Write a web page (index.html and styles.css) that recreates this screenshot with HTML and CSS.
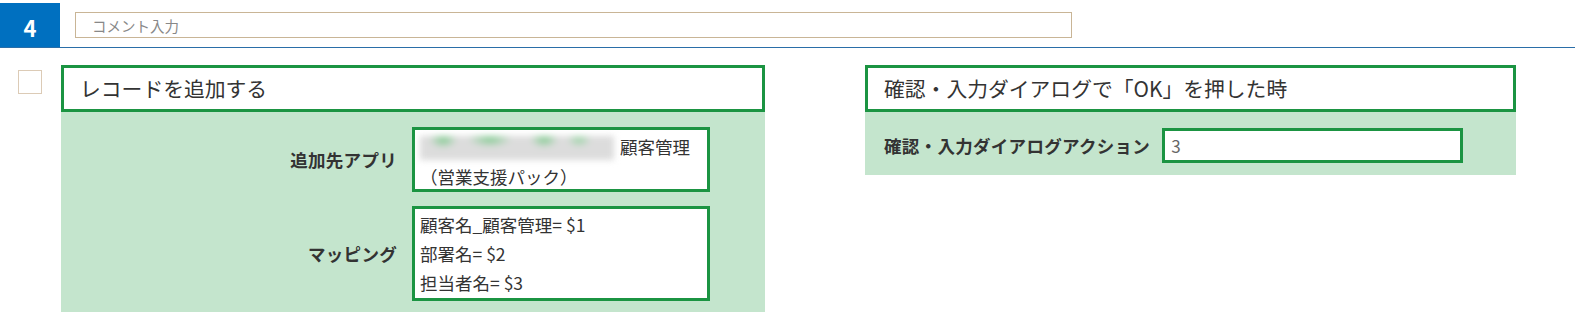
FILE: index.html
```html
<!DOCTYPE html>
<html lang="ja">
<head>
    <meta charset="UTF-8">
    <meta name="viewport" content="width=device-width, initial-scale=1.0">
    <title>アクション設定</title>
    <link rel="stylesheet" href="styles.css">
</head>
<body>
    <header class="step-bar">
        <div class="step-no">4</div>
        <input type="text" class="comment" placeholder="コメント入力">
    </header>

    <main class="step-body">
        <span class="check"></span>

        <!-- 左：アクション -->
        <section class="card card-action">
            <div class="card-title">レコードを追加する</div>
            <div class="card-body action-body">
                <div class="field-label">追加先アプリ</div>
                <div class="field-box app-box">
                    <span class="masked"></span>顧客管理（営業支援パック）
                </div>

                <div class="field-label">マッピング</div>
                <div class="field-box">
                    顧客名_顧客管理= $1<br>
                    部署名= $2<br>
                    担当者名= $3
                </div>
            </div>
        </section>

        <!-- 右：トリガー -->
        <section class="card card-trigger">
            <div class="card-title">確認・入力ダイアログで「OK」を押した時</div>
            <div class="card-body trigger-body">
                <div class="field-label">確認・入力ダイアログアクション</div>
                <input type="text" class="value-input" value="3">
            </div>
        </section>
    </main>
</body>
</html>
```

FILE: styles.css
```css
body {
    font-family: "Noto Sans CJK JP", "Noto Sans", sans-serif;
    background: #fff;
    color: #333;
    margin: 0;
    padding: 0;
}
.step-bar {
    display: flex;
    align-items: flex-start;
    padding-top: 3px;
    border-bottom: 1px solid #2a6ea8;
}
.step-no {
    width: 60px;
    height: 44px;
    padding-top: 3px;
    box-sizing: border-box;
    background: #0070c0;
    color: #fff;
    font-size: 22px;
    font-weight: bold;
    display: flex;
    align-items: center;
    justify-content: center;
}
.comment {
    width: 997px;
    height: 26px;
    box-sizing: border-box;
    margin: 9px 0 0 15px;
    padding: 0 16px;
    border: 1px solid #c9b596;
    font-family: inherit;
    font-size: 14.5px;
    outline: none;
}
.comment::placeholder {
    color: #888;
}
.step-body {
    display: flex;
    align-items: flex-start;
    padding: 17px 0 0 18px;
}
.check {
    width: 24px;
    height: 24px;
    box-sizing: border-box;
    border: 1px solid #dccbb6;
    margin: 5px 19px 0 0;
}
.card-action {
    width: 704px;
}
.card-trigger {
    width: 651px;
    margin-left: 100px;
}
.card-title {
    height: 47px;
    box-sizing: border-box;
    border: 3px solid #1b9442;
    background: #fff;
    padding: 0 16px;
    line-height: 40px;
    font-size: 20.8px;
    color: #333;
}
.card-body {
    background: #c4e5cd;
}
.action-body {
    display: grid;
    grid-template-columns: 336px 298px;
    column-gap: 15px;
    row-gap: 14px;
    align-items: center;
    padding: 15px 0 11px;
}
.field-label {
    font-size: 17.5px;
    font-weight: bold;
    letter-spacing: 0.3px;
    color: #333;
    text-align: right;
    white-space: nowrap;
}
.field-box {
    border: 3px solid #1b9442;
    background: #fff;
    padding: 1px 5px;
    font-size: 17.5px;
    line-height: 29px;
    color: #333;
}
.app-box {
    height: 65px;
    box-sizing: border-box;
    padding-top: 2px;
    line-height: 30px;
}
.masked {
    display: inline-block;
    width: 194px;
    height: 24px;
    margin-right: 6px;
    vertical-align: -6px;
    background:
        radial-gradient(ellipse 14px 8px at 12% 16%, #7cc98b 0, transparent 100%),
        radial-gradient(ellipse 22px 8px at 36% 12%, #7cc98b 0, transparent 100%),
        radial-gradient(ellipse 14px 8px at 64% 14%, #7cc98b 0, transparent 100%),
        radial-gradient(ellipse 12px 7px at 82% 16%, #96d3a2 0, transparent 100%),
        #dcdcdc;
    filter: blur(3px);
}
.trigger-body {
    display: flex;
    align-items: center;
    gap: 12px;
    padding: 16px 19px 12px;
}
.value-input {
    width: 301px;
    height: 35px;
    box-sizing: border-box;
    border: 3px solid #1b9442;
    padding: 0 6px;
    font-family: inherit;
    font-size: 17px;
    color: #666;
    outline: none;
}
```
